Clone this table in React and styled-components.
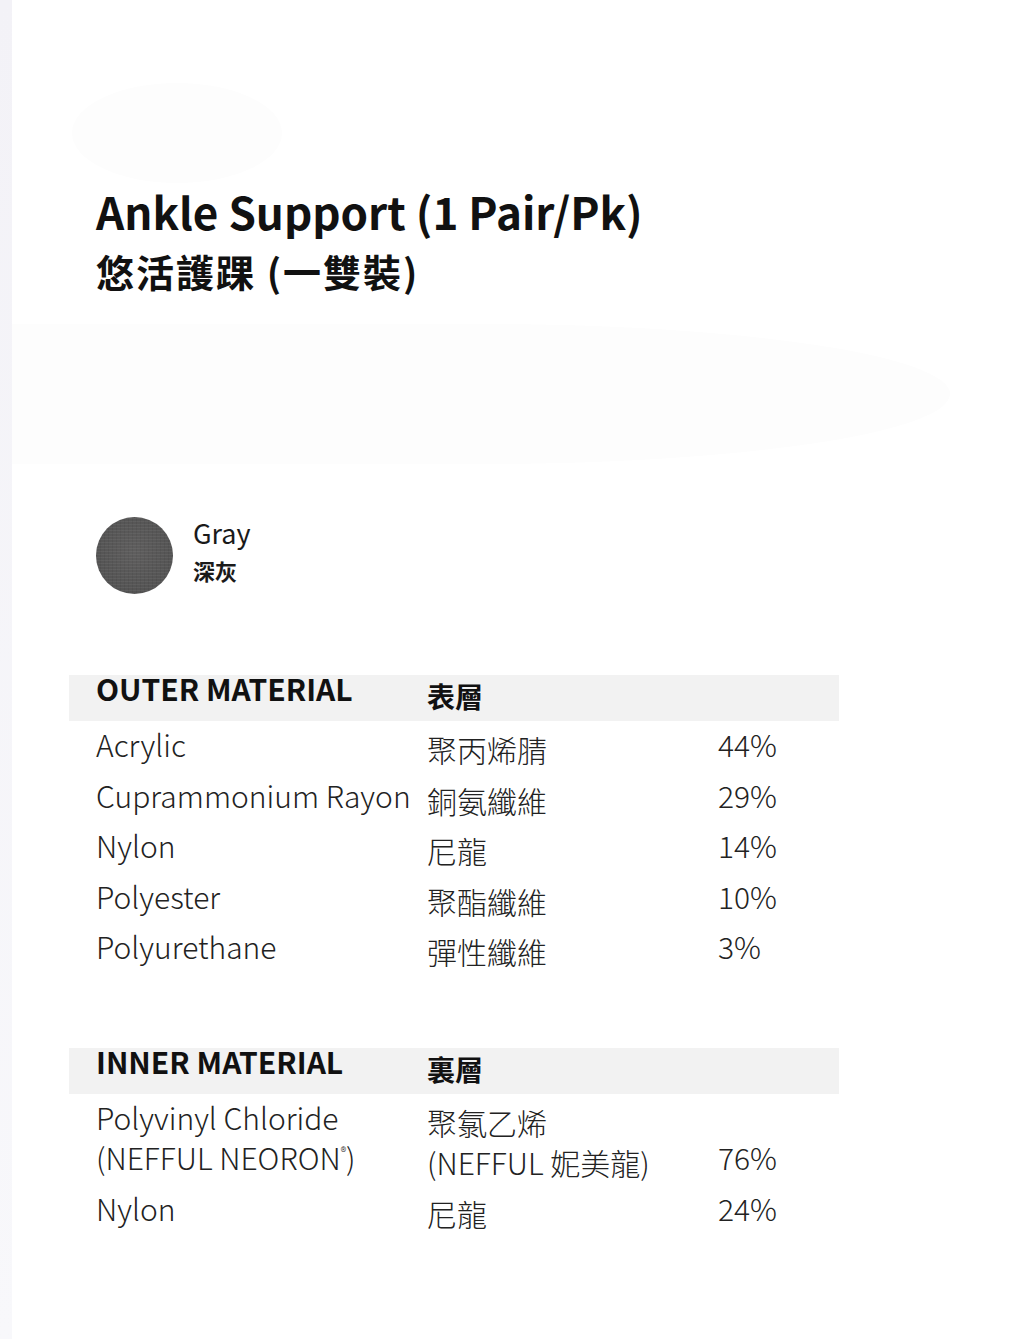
import React from 'react';
import styled, { createGlobalStyle } from 'styled-components';

const GlobalStyle = createGlobalStyle`
    html, body {
        margin: 0;
        padding: 0;
        background: #ffffff;
    }
    body {
        font-family: 'Noto Sans CJK TC', 'Noto Sans', sans-serif;
        color: #1c1c1c;
    }
`

const outer = [
    { en: 'Acrylic', zh: '聚丙烯腈', pct: '44%' },
    { en: 'Cuprammonium Rayon', zh: '銅氨纖維', pct: '29%' },
    { en: 'Nylon', zh: '尼龍', pct: '14%' },
    { en: 'Polyester', zh: '聚酯纖維', pct: '10%' },
    { en: 'Polyurethane', zh: '彈性纖維', pct: '3%' },
];

const inner = [
    { en: ['Polyvinyl Chloride', <>(NEFFUL NEORON<Reg>®</Reg>)</>], zh: ['聚氯乙烯', '(NEFFUL 妮美龍)'], pct: '76%' },
    { en: ['Nylon'], zh: ['尼龍'], pct: '24%' },
];

function Reg({ children }) {
    return <RegMark>{children}</RegMark>;
}

const Page = styled.div`
    display: flex;
    min-height: 1339px;
    overflow: hidden;
`

// the grey rail on the left edge
const Rail = styled.div`
    width: 12px;
    flex: none;
    background: linear-gradient(#f3f2f7, #f8f8fb);
    position: relative;
    z-index: 1;
`

const Main = styled.main`
    flex: 1;
    padding: 83px 0 0 57px;
    display: flex;
    flex-direction: column;
`

const Blob = styled.div`
    flex: none;
    width: ${p => p.$w}px;
    height: ${p => p.$h}px;
    margin-left: ${p => p.$ml || 0}px;
    margin-top: ${p => p.$mt || 0}px;
    border-radius: ${p => p.$round || '50%'};
    background: #fdfdfd;
`

const Heading = styled.div`
    padding-left: 27px;
`

const Title = styled.h1`
    margin: 0;
    font-size: 44px;
    line-height: 56px;
    font-weight: 700;
    color: #111;
`

const SubTitle = styled.h2`
    margin: 7px 0 0;
    font-size: 38px;
    line-height: 50px;
    font-weight: 700;
    letter-spacing: 2px;
    color: #111;
`

const SwatchRow = styled.div`
    display: flex;
    align-items: flex-start;
    gap: 20px;
    margin-top: 53px;
    padding-left: 27px;
`

const Swatch = styled.div`
    width: 77px;
    height: 77px;
    border-radius: 50%;
    background:
        repeating-linear-gradient(0deg, rgba(255,255,255,0.05) 0 1px, transparent 1px 3px),
        repeating-linear-gradient(90deg, rgba(0,0,0,0.06) 0 1px, transparent 1px 4px),
        radial-gradient(circle at 50% 45%, #5f5e5e, #4f4f4f);
`

const SwatchText = styled.div`
    display: flex;
    flex-direction: column;
`

const ColourEn = styled.span`
    font-size: 27px;
    line-height: 32px;
    color: #1a1a1a;
`

const ColourZh = styled.span`
    margin-top: 6px;
    font-size: 22px;
    line-height: 30px;
    font-weight: 700;
    color: #1a1a1a;
`

const Table = styled.section`
    width: 770px;
    margin-top: ${p => p.$mt}px;
`

const HeadRow = styled.div`
    display: grid;
    grid-template-columns: 358px 291px 121px;
    height: 46px;
    background: #f2f2f2;
`

const HeadEn = styled.div`
    padding-left: 27px;
    margin-top: -2px;
    font-size: 30px;
    line-height: 30px;
    font-weight: 700;
    color: #111;
`

const HeadZh = styled.div`
    padding-top: 6px;
    font-size: 28px;
    line-height: 30px;
    font-weight: 700;
    color: #111;
`

const Row = styled.div`
    display: grid;
    grid-template-columns: 358px 291px 121px;
    padding: 3px 0 7.6px;
    font-size: 30px;
    line-height: 40px;
    font-weight: 300;
    color: #222;
`

const CellEn = styled.div`
    padding-left: 27px;
    white-space: nowrap;
`

// chinese column sits a few pixels lower than the latin text
const CellZh = styled.div`
    position: relative;
    top: 5px;
    font-size: 30px;
    white-space: nowrap;
`

const CellPct = styled.div`
    align-self: end;
`

const RegMark = styled.sup`
    font-size: 12px;
    line-height: 0;
    vertical-align: 14px;
`

function MaterialTable({ en, zh, rows, mt }) {
    return (
        <Table $mt={mt}>
            <HeadRow>
                <HeadEn>{en}</HeadEn>
                <HeadZh>{zh}</HeadZh>
                <div />
            </HeadRow>
            {rows.map((r, i) => (
                <Row key={i}>
                    <CellEn>{[].concat(r.en).map((t, j) => <div key={j}>{t}</div>)}</CellEn>
                    <CellZh>{[].concat(r.zh).map((t, j) => <div key={j}>{t}</div>)}</CellZh>
                    <CellPct>{r.pct}</CellPct>
                </Row>
            ))}
        </Table>
    );
}

export default function App() {
    return (
        <>
            <GlobalStyle />
            <Page>
                <Rail />
                <Main>
                    <Blob $w={210} $h={100} $ml={3} />
                    <Heading>
                        <Title>Ankle Support (1 Pair/Pk)</Title>
                        <SubTitle>悠活護踝 (一雙裝)</SubTitle>
                    </Heading>
                    <Blob $w={938} $h={140} $ml={-57} $mt={28} $round='0 50% 50% 0 / 0 50% 50% 0' />
                    <SwatchRow>
                        <Swatch />
                        <SwatchText>
                            <ColourEn>Gray</ColourEn>
                            <ColourZh>深灰</ColourZh>
                        </SwatchText>
                    </SwatchRow>
                    <MaterialTable en='OUTER MATERIAL' zh='表層' rows={outer} mt={81} />
                    <MaterialTable en='INNER MATERIAL' zh='裏層' rows={inner} mt={74} />
                </Main>
            </Page>
        </>
    );
}
